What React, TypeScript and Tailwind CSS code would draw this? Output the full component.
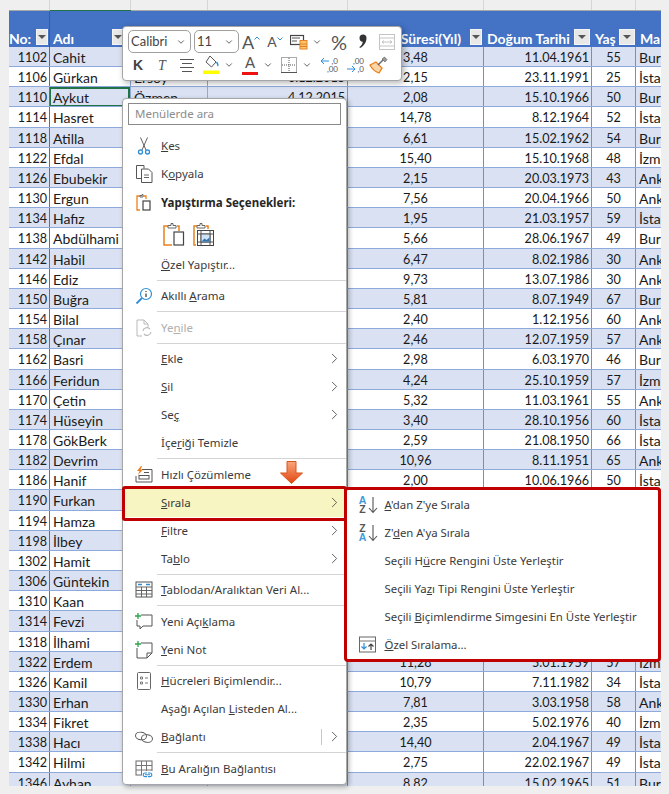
import React from 'react'
import { ChevronRight, ChevronDown } from 'lucide-react'

const cols = 'grid grid-cols-[41px_81px_77px_140px_136px_108px_44px_25px]'

const rows: string[][] = [
  ['1102', 'Cahit', 'Yılmaz', '5.11.2012', '3,48', '11.04.1961', '55', 'Bur'],
  ['1106', 'Gürkan', 'Ersoy', '6.12.2015', '2,15', '23.11.1991', '25', 'İsta'],
  ['1110', 'Aykut', 'Özmen', '4.12.2015', '2,08', '15.10.1966', '50', 'Bur'],
  ['1114', 'Hasret', '', '', '14,78', '8.12.1964', '52', 'İsta'],
  ['1118', 'Atilla', '', '', '6,61', '15.02.1962', '54', 'Bur'],
  ['1122', 'Efdal', '', '', '15,40', '15.10.1968', '48', 'İzm'],
  ['1126', 'Ebubekir', '', '', '2,15', '20.03.1973', '43', 'Ank'],
  ['1130', 'Ergun', '', '', '7,56', '20.04.1966', '50', 'Ank'],
  ['1134', 'Hafız', '', '', '1,95', '21.03.1957', '59', 'İsta'],
  ['1138', 'Abdülhami', '', '', '5,66', '28.06.1967', '49', 'Bur'],
  ['1142', 'Habil', '', '', '6,47', '8.02.1986', '30', 'Ank'],
  ['1146', 'Ediz', '', '', '9,73', '13.07.1986', '30', 'Ank'],
  ['1150', 'Buğra', '', '', '5,81', '8.07.1949', '67', 'Bur'],
  ['1154', 'Bilal', '', '', '2,40', '1.12.1956', '60', 'Ank'],
  ['1158', 'Çınar', '', '', '2,46', '12.07.1959', '57', 'Ank'],
  ['1162', 'Basri', '', '', '2,98', '6.03.1970', '46', 'Bur'],
  ['1166', 'Feridun', '', '', '4,24', '25.10.1959', '57', 'İzm'],
  ['1170', 'Çetin', '', '', '5,32', '11.03.1961', '55', 'Ank'],
  ['1174', 'Hüseyin', '', '', '3,40', '28.10.1956', '60', 'İsta'],
  ['1178', 'GökBerk', '', '', '2,59', '21.08.1950', '66', 'İsta'],
  ['1182', 'Devrim', '', '', '10,96', '8.11.1951', '65', 'Ank'],
  ['1186', 'Hanif', '', '', '2,00', '10.06.1966', '50', 'İsta'],
  ['1190', 'Furkan', '', '', '', '', '', ''],
  ['1194', 'Hamza', '', '', '', '', '', ''],
  ['1198', 'İlbey', '', '', '', '', '', ''],
  ['1302', 'Hamit', '', '', '', '', '', ''],
  ['1306', 'Güntekin', '', '', '', '', '', ''],
  ['1310', 'Kaan', '', '', '', '', '', ''],
  ['1314', 'Fevzi', '', '', '', '', '', ''],
  ['1318', 'İlhami', '', '', '', '', '', ''],
  ['1322', 'Erdem', '', '', '11,28', '5.01.1959', '57', 'İzm'],
  ['1326', 'Kamil', '', '', '10,79', '7.11.1982', '34', 'İsta'],
  ['1330', 'Erhan', '', '', '7,81', '3.03.1958', '58', 'Ank'],
  ['1334', 'Fikret', '', '', '2,35', '5.02.1976', '40', 'İzm'],
  ['1338', 'Hacı', '', '', '14,40', '2.04.1967', '49', 'İsta'],
  ['1342', 'Hilmi', '', '', '2,75', '22.02.1967', '49', 'İsta'],
  ['1346', 'Ayhan', '', '', '8,82', '15.02.1965', '51', 'Bur'],
]

function FilterBtn({ wide }: { wide?: boolean }) {
  return (
    <div className={`${wide ? 'w-[16px]' : 'w-[12px]'} h-[16px] shrink-0 bg-[#e8e8e8] border border-[#f5f5f5] flex items-center justify-center`}>
      <div className="w-0 h-0 border-l-[4px] border-r-[4px] border-t-[4px] border-l-transparent border-r-transparent border-t-[#555555]" />
    </div>
  )
}

function Header() {
  const cell = 'flex items-end justify-between pb-[2px] border-r border-[#4472c4]'
  const label = 'mb-[-3px]'
  return (
    <div className={`${cols} h-[36px] bg-[#4472c4] text-white font-bold text-[14px] leading-[18px]`}>
      <div className={`${cell} pr-[1px] border-r-[#2f5cb0]`}>
        <span className={label}>No:</span>
        <FilterBtn />
      </div>
      <div className={`${cell} pl-[3px] pr-[6px]`}>
        <span className={label}>Adı</span>
        <FilterBtn />
      </div>
      <div className={cell} />
      <div className={cell} />
      <div className={`${cell} pr-[1px] justify-end gap-[9px]`}>
        <span className={label}>Süresi(Yıl)</span>
        <FilterBtn />
      </div>
      <div className={`${cell} pl-[3px] pr-[1px]`}>
        <span className={label}>Doğum Tarihi</span>
        <FilterBtn wide />
      </div>
      <div className={`${cell} pl-[3px]`}>
        <span className={label}>Yaş</span>
        <FilterBtn wide />
      </div>
      <div className="flex items-end pb-[2px] pl-[4px] overflow-hidden">
        <span className={label}>Ma</span>
      </div>
    </div>
  )
}

function Sheet() {
  return (
    <div className="h-[775px] overflow-hidden">
      <Header />
      {rows.map((r, i) => (
        <div
          key={r[0]}
          className={`${cols} grid-rows-[19.16px] h-[20.16px] leading-[22px] text-[14px] text-[#1a1a1a] border-b border-[#8ea9db] ${i % 2 === 0 ? 'bg-[#d9e1f2]' : 'bg-white'}`}
        >
          <div className="text-right text-[12.6px] pr-[2px] border-r border-[#4472c4]">{r[0]}</div>
          <div className="relative pl-[3px] border-r border-[#8ea9db] whitespace-nowrap overflow-hidden">
            {r[1]}
            {i === 2 && <div className="absolute -left-[1px] right-0 top-0 -bottom-[1px] border-2 border-[#217346]" />}
          </div>
          <div className="pl-[3px] border-r border-[#8ea9db]">{r[2]}</div>
          <div className="text-right text-[12.6px] pr-[2px] border-r border-[#6f90d0]">{r[3]}</div>
          <div className="text-center text-[12.6px] border-r border-[#6f90d0]">{r[4]}</div>
          <div className="text-right text-[12.6px] pr-[2px] border-r border-[#6f90d0]">{r[5]}</div>
          <div className="text-center text-[12.6px] border-r border-[#6f90d0]">{r[6]}</div>
          <div className="pl-[3px] whitespace-nowrap overflow-hidden">{r[7]}</div>
        </div>
      ))}
    </div>
  )
}

/* --- icons --- */
const Ico = ({ children, s = 20 }: { children: React.ReactNode; s?: number }) => (
  <svg width={s} height={s} viewBox="0 0 20 20" fill="none" strokeWidth="1" stroke="#555555">
    {children}
  </svg>
)

const Scissors = () => (
  <Ico>
    <path d="M6.500 1.500l5.500 12.500M13.500 1.500L8 14" stroke="#606060" strokeWidth="1" />
    <circle cx="6.500" cy="16" r="2" stroke="#2e8fd8" strokeWidth="1.300" />
    <circle cx="13.500" cy="16" r="2" stroke="#2e8fd8" strokeWidth="1.300" />
  </Ico>
)
const Copy = () => (
  <Ico>
    <path d="M7 14.500H2.500V1.500H10l0 3" />
    <path d="M7.500 5h7l3.500 3.500v10H7.500z" fill="#fff" />
    <path d="M10 11h5M10 13.500h5" strokeWidth=".9" />
  </Ico>
)
const PasteSmall = () => (
  <Ico>
    <path d="M7 3H3v14h3" stroke="#e8821e" strokeWidth="1.300" />
    <path d="M9.500 3h2.500v3" stroke="#e8821e" strokeWidth="1.300" />
    <path d="M6 4V2.500h2V1.500h1V4z" stroke="#666" fill="#fff" />
    <rect x="9" y="8" width="7" height="9" stroke="#444" fill="#fff" strokeWidth="1.200" />
  </Ico>
)
const PasteBig = () => (
  <svg width="22" height="25" viewBox="0 0 22 25" fill="none" stroke="#666">
    <path d="M5 4H1v19h8" stroke="#e8821e" strokeWidth="1.500" />
    <path d="M14 4h2v5" stroke="#e8821e" strokeWidth="1.500" />
    <path d="M5 6V3.500h3V1.500h2v2h3V6z" fill="#fff" />
    <rect x="11" y="10" width="9.500" height="13" stroke="#444" fill="#fff" strokeWidth="1.200" />
  </svg>
)
const PastePicture = () => (
  <svg width="22" height="25" viewBox="0 0 22 25" fill="none" stroke="#666">
    <path d="M5 4H1v19h2" stroke="#e8821e" strokeWidth="1.500" />
    <path d="M13 4h2v3" stroke="#e8821e" strokeWidth="1.500" />
    <path d="M4 6V3.500h3V1.500h2v2h3V6z" fill="#fff" />
    <rect x="4.500" y="8.500" width="16" height="15" stroke="#444" fill="#fff" />
    <path d="M4.500 12h16M4.500 20h16M8 8.500v15M17 8.500v15" stroke="#555" />
    <rect x="8" y="12" width="9" height="8" fill="#cfe3f5" stroke="#555" />
    <path d="M8.500 19.500l3-3 2 1.500 3-2.500v4z" fill="#2e75b6" stroke="none" />
  </svg>
)
const SmartLookup = () => (
  <Ico>
    <circle cx="12" cy="8" r="5.500" stroke="#2e8fd8" strokeWidth="1.200" />
    <path d="M8 12L2.500 17.500" stroke="#2e8fd8" strokeWidth="1.800" />
    <path d="M12 5v1M12 7.500v3.500" stroke="#444" strokeWidth="1.300" />
  </Ico>
)
const Refresh = () => (
  <Ico>
    <path d="M8 18H3V2h7l4 4v3M10 2v4h4" stroke="#b9b9b9" />
    <path d="M9 13a4 4 0 0 1 7-2M17 14a4 4 0 0 1-7 2" stroke="#b9b9b9" strokeWidth="1.200" />
  </Ico>
)
const QuickAnalysis = () => (
  <Ico>
    <path d="M8 4.500h10V17H2v-6" stroke="#555" />
    <rect x="5" y="10.500" width="10" height="3.500" stroke="#555" />
    <path d="M10 7.500h5" stroke="#555" />
    <path d="M7 1L3 6h2.500L4 10l5-5.500H6.500L8 1z" fill="#ec7c1c" stroke="none" />
  </Ico>
)
const TableData = () => (
  <Ico>
    <rect x="2" y="2" width="16" height="15" stroke="#555" />
    <path d="M2 7h16M2 10.500h16M2 14h16M7.500 7v10M12.500 7v10" stroke="#666" />
    <path d="M4 4.500h4M12 4.500h4" stroke="#2e8fd8" strokeWidth="1.400" />
  </Ico>
)
const NewComment = () => (
  <Ico>
    <path d="M7 3h11v11H9l-3 3v-3H3V8" stroke="#555" />
    <path d="M4 1v6M1 4h6" stroke="#2ea44f" strokeWidth="1.300" />
  </Ico>
)
const NewNote = () => (
  <Ico>
    <path d="M7 3h11v10l-5 5H3V8" stroke="#555" />
    <path d="M13 18v-5h5" stroke="#555" />
    <path d="M4 1v6M1 4h6" stroke="#2ea44f" strokeWidth="1.300" />
  </Ico>
)
const FormatCells = () => (
  <Ico>
    <rect x="3.500" y="1.500" width="13" height="17" rx="1" stroke="#666" />
    <path d="M6.500 6h2v2h-2zM6.500 11h2v2h-2zM11 7h3M11 12h3" stroke="#777" />
  </Ico>
)
const LinkIco = () => (
  <Ico>
    <ellipse cx="7" cy="9" rx="5.500" ry="3.800" stroke="#555" transform="rotate(8 7 9)" />
    <ellipse cx="13" cy="11.500" rx="5.500" ry="3.800" stroke="#555" transform="rotate(8 13 11.500)" />
  </Ico>
)
const RangeLink = () => (
  <Ico>
    <rect x="2" y="2" width="16" height="14" stroke="#666" />
    <path d="M2 6.500h16M2 11h16M7.500 2v14M12.500 2v14" stroke="#777" />
    <rect x="8" y="12" width="11" height="7" fill="#fff" stroke="none" />
    <path d="M13 14h-2a1.800 1.800 0 0 0 0 3.600h2M14 14h2a1.800 1.800 0 0 1 0 3.600h-2M11 15.800h5" stroke="#2e8fd8" strokeWidth="1.100" />
  </Ico>
)
const SortIco = ({ down }: { down?: boolean }) => {
  const top = down ? '#555555' : '#3f9ade'
  const bottom = down ? '#3f9ade' : '#555555'
  return (
    <span className="relative flex w-[20px] h-[20px] items-center">
      <span className="flex flex-col items-center w-[10px] text-[10.500px] leading-[9.500px] font-bold font-['Liberation_Sans',sans-serif]">
        <span style={{ color: top }}>{down ? 'Z' : 'A'}</span>
        <span style={{ color: bottom }}>{down ? 'A' : 'Z'}</span>
      </span>
      <svg width="10" height="18" viewBox="0 0 10 18" fill="none" stroke="#555" strokeWidth="1.100">
        <path d="M5 1v15M1 12l4 4.500L9 12" />
      </svg>
    </span>
  )
}
const CustomSort = () => (
  <Ico>
    <rect x="1.500" y="2" width="16" height="15" stroke="#666" />
    <path d="M1.500 6h16" stroke="#777" />
    <path d="M6 8v6M3.500 11.500L6 14l2.500-2.500" stroke="#2e8fd8" strokeWidth="1.200" />
    <path d="M13 15V9M10.500 11.500L13 9l2.500 2.500" stroke="#444" strokeWidth="1.200" />
  </Ico>
)

/* --- menu --- */
function Sep() {
  return (
    <div className="h-[3.500px] flex items-center pl-[34px]">
      <div className="h-px w-full bg-[#d4d4d4]" />
    </div>
  )
}

function Arrow() {
  return <ChevronRight className="w-[17px] h-[17px] text-[#555555] absolute right-[3px] top-[5px]" strokeWidth={1.300} />
}

function Item({
  icon,
  children,
  arrow,
  disabled,
  divider,
}: {
  icon?: React.ReactNode
  children: React.ReactNode
  arrow?: boolean
  disabled?: boolean
  divider?: boolean
}) {
  return (
    <div className={`relative h-[28px] flex items-center whitespace-nowrap ${disabled ? 'text-[#b0b0b0]' : ''}`}>
      <span className="w-[38px] flex justify-center shrink-0 pl-[3px]">{icon}</span>
      <span>{children}</span>
      {divider && <span className="absolute right-[24px] top-[6px] h-[16px] w-px bg-[#c8c8c8]" />}
      {arrow && <Arrow />}
    </div>
  )
}

function ContextMenu() {
  return (
    <div className="absolute left-[122px] top-[98px] w-[225px] h-[687px] bg-white border border-[#a6a6a6] rounded-[4px] shadow-[2px_2px_5px_rgba(0,0,0,0.3)] text-[11.500px] text-[#3b3b3b] font-['Noto_Sans',sans-serif]">
      <div className="mx-[5px] mt-[4px] mb-[6.500px] h-[22px] border border-[#8a8a8a] flex items-center pl-[6px] text-[#8c8c8c]">Menülerde ara</div>
      <Item icon={<Scissors />}><u>K</u>es</Item>
      <Item icon={<Copy />}>K<u>o</u>pyala</Item>
      <div className="h-[31px] flex items-center font-bold text-[#262626]">
        <span className="w-[38px] flex justify-center shrink-0 pl-[3px]"><PasteSmall /></span>
        Yapıştırma Seçenekleri:
      </div>
      <div className="h-[32px] flex items-center gap-[8px] pl-[40px]">
        <PasteBig />
        <PastePicture />
      </div>
      <Item><u>Ö</u>zel Yapıştır...</Item>
      <Sep />
      <Item icon={<SmartLookup />}>Akıllı <u>A</u>rama</Item>
      <Sep />
      <Item icon={<Refresh />} disabled>Ye<u>n</u>ile</Item>
      <Sep />
      <Item arrow><u>E</u>kle</Item>
      <Item arrow><u>S</u>il</Item>
      <Item arrow>Se<u>ç</u></Item>
      <Item>İçe<u>r</u>iği Temizle</Item>
      <Sep />
      <Item icon={<QuickAnalysis />}>Hızlı Çözümleme</Item>
      <div className="relative bg-[#f7f5c2]">
        <Item arrow><u>S</u>ırala</Item>
        <div className="absolute -left-[1px] -right-[1px] -top-[2.500px] -bottom-[4px] border-[3.500px] border-[#c00000] rounded-[3px]" />
      </div>
      <Item arrow><u>F</u>iltre</Item>
      <Item arrow>Ta<u>b</u>lo</Item>
      <Sep />
      <Item icon={<TableData />}><u>T</u>ablodan/Aralıktan Veri Al...</Item>
      <Sep />
      <Item icon={<NewComment />}>Yeni Açı<u>k</u>lama</Item>
      <Item icon={<NewNote />}><u>Y</u>eni Not</Item>
      <Sep />
      <Item icon={<FormatCells />}><u>H</u>ücreleri Biçimlendir...</Item>
      <Item>Aşağı Açılan <u>L</u>isteden Al...</Item>
      <Item icon={<LinkIco />} arrow divider><u>B</u>ağlantı</Item>
      <Sep />
      <Item icon={<RangeLink />}><u>B</u>u Aralığın Bağlantısı</Item>
    </div>
  )
}

function SubMenu() {
  const row = 'h-[28px] flex items-center whitespace-nowrap'
  const slot = 'w-[34px] flex justify-center shrink-0'
  return (
    <div className="absolute left-[344px] top-[487px] w-[317px] h-[175px] bg-white border-[3.500px] border-[#c00000] rounded-[4px] text-[11.400px] text-[#3b3b3b] font-['Noto_Sans',sans-serif] pl-[3.500px] pt-[1px]">
      <div className={row}><span className={slot}><SortIco /></span><span><u>A</u>'dan Z'ye Sırala</span></div>
      <div className={row}><span className={slot}><SortIco down /></span><span>Z'<u>d</u>en A'ya Sırala</span></div>
      <div className={row}><span className={slot} /><span>Seçili H<u>ü</u>cre Rengini Üste Yerleştir</span></div>
      <div className={row}><span className={slot} /><span>Seçili Ya<u>z</u>ı Tipi Rengini Üste Yerleştir</span></div>
      <div className={row}><span className={slot} /><span>Seçili <u>B</u>içimlendirme Simgesini En Üste Yerleştir</span></div>
      <div className={row}><span className={slot}><CustomSort /></span><span><u>Ö</u>zel Sıralama...</span></div>
    </div>
  )
}

/* --- mini toolbar --- */
function Caret() {
  return <ChevronDown className="w-[10px] h-[10px] text-[#444444]" strokeWidth={2} />
}

function Combo({ w, label }: { w: string; label: string }) {
  return (
    <div className={`${w} h-[23px] border border-[#a0a0a0] rounded-[5px] flex items-center justify-between pl-[2px] pr-[4px] text-[#444444] text-[13px]`}>
      <span>{label}</span>
      <Caret />
    </div>
  )
}

const slot = 'w-[24px] h-[22px] flex items-center justify-center shrink-0'
const caretSlot = 'w-[12px] h-[22px] flex items-center justify-center shrink-0'

function Toolbar() {
  return (
    <div className="absolute left-[122px] top-[26px] w-[280px] h-[55px] bg-white border border-[#a6a6a6] rounded-[4px] shadow-[2px_2px_6px_rgba(0,0,0,0.3)] font-['Lato',sans-serif] pt-[3px]">
      <div className="flex items-center pl-[5px]">
        <Combo w="w-[63px]" label="Calibri" />
        <div className="w-[3px]" />
        <Combo w="w-[45px]" label="11" />
        <div className={slot}>
          <span className="text-[18px] text-[#555555] leading-none">A</span>
          <svg width="6" height="4" viewBox="0 0 6 4" className="self-start mt-[5px]" fill="none" stroke="#2e8fd8"><path d="M.5 3.500L3 1l2.500 2.500" /></svg>
        </div>
        <div className={slot}>
          <span className="text-[14px] text-[#555555] leading-none">A</span>
          <svg width="6" height="4" viewBox="0 0 6 4" className="self-start mt-[6px]" fill="none" stroke="#2e8fd8"><path d="M.5.500L3 3 5.500.500" /></svg>
        </div>
        <div className={slot}>
          <svg width="18" height="17" viewBox="0 0 18 17" fill="none" stroke="#444">
            <rect x=".500" y="2.500" width="13" height="9" strokeWidth="1.200" />
            <path d="M2 5h8M2 8h5" strokeWidth="1" stroke="#555" />
            <rect x="10" y="7.500" width="7" height="8.500" fill="#f8c471" stroke="#e8821e" />
            <path d="M10 11h7M10 13.500h7" stroke="#e8821e" />
          </svg>
        </div>
        <div className={caretSlot}><Caret /></div>
        <div className={`${slot} ml-[4px] text-[20px] leading-none text-[#555555]`}>%</div>
        <div className={slot}>
          <svg width="10" height="15" viewBox="0 0 10 15" fill="#333333">
            <path d="M1.500 4a3.500 3.500 0 0 1 7 0c0 4-2.500 8-6.500 10l-.6-1c2-1.500 3.100-3 3.400-5.300C3 7.900 1.500 6.300 1.500 4z" />
          </svg>
        </div>
        <div className={slot}>
          <svg width="16" height="16" viewBox="0 0 16 16" fill="none" stroke="#c4c4c4">
            <rect x=".500" y=".500" width="15" height="15" />
            <path d="M.500 4h15M.500 12h15" />
            <path d="M3 8h10M3 8l2-1.500M3 8l2 1.500M13 8l-2-1.500M13 8l-2 1.500" />
          </svg>
        </div>
      </div>
      <div className="flex items-center pl-[3px] mt-[1px]">
        <div className={`${slot} text-[14px] font-bold text-[#444444] font-['Liberation_Sans',sans-serif]`}>K</div>
        <div className={`${slot} text-[14px] italic text-[#555555] font-['Liberation_Serif',serif]`}>T</div>
        <div className={`${slot} ml-[1px]`}>
          <svg width="16" height="15" viewBox="0 0 16 15" stroke="#555"><path d="M1 1.500h14M3 5.500h10M1 9.500h14M3 13.500h10" /></svg>
        </div>
        <div className={slot}>
          <svg width="18" height="20" viewBox="0 0 18 20" fill="none" stroke="#555">
            <path d="M8 1l6 6-4.500 5L4 7z" />
            <path d="M14.500 7c1.500 2 2 3 1 4" stroke="#2e8fd8" strokeWidth="1.400" />
            <rect x="1" y="15.500" width="16" height="3.500" fill="#ffff00" stroke="none" />
          </svg>
        </div>
        <div className={caretSlot}><Caret /></div>
        <div className={`${slot} ml-[3px]`}>
          <div className="flex flex-col items-center leading-none">
            <span className="text-[15px] text-[#555555] h-[15px]">A</span>
            <span className="mt-[2px] w-[16px] h-[3.500px] bg-[#ee1111]" />
          </div>
        </div>
        <div className={caretSlot}><Caret /></div>
        <div className={`${slot} ml-[3px]`}>
          <svg width="16" height="16" viewBox="0 0 16 16" fill="none" stroke="#555" strokeDasharray="1 1">
            <rect x=".500" y=".500" width="15" height="15" />
            <path d="M8 1v14M1 8h14" />
            <path d="M0 15.500h16" strokeDasharray="none" />
          </svg>
        </div>
        <div className={caretSlot}><Caret /></div>
        <div className={`${slot} ml-[4px]`}>
          <div className="w-[18px] text-[8px] leading-[8.500px] text-[#555555]">
            <div className="flex items-center justify-between">
              <svg width="10" height="8" viewBox="0 0 10 8" fill="none" stroke="#2e8fd8"><path d="M9 4H1M4 1L1 4l3 3" /></svg>
              <span>,0</span>
            </div>
            <div className="text-right">,00</div>
          </div>
        </div>
        <div className={`${slot} ml-[2px]`}>
          <div className="w-[18px] text-[8px] leading-[8.500px] text-[#555555]">
            <div className="text-right">,00</div>
            <div className="flex items-center justify-between">
              <svg width="10" height="8" viewBox="0 0 10 8" fill="none" stroke="#2e8fd8"><path d="M1 4h8M6 1l3 3-3 3" /></svg>
              <span>,0</span>
            </div>
          </div>
        </div>
        <div className="w-[23px] h-[22px] flex items-center justify-center shrink-0">
          <svg width="19" height="18" viewBox="0 0 19 18" fill="none">
            <path d="M1 9l6-3 6 6-3 5c-3-1-7-4-9-8z" fill="#fbd5a5" stroke="#e8821e" strokeWidth="1.300" />
            <path d="M9 9l5-5" stroke="#666" strokeWidth="1.500" />
            <path d="M13 3l2.500-2 2.500 2.500-2 2.500z" fill="#999" stroke="#555" strokeWidth=".6" />
          </svg>
        </div>
      </div>
    </div>
  )
}

function OrangeArrow() {
  return (
    <svg width="23" height="23" viewBox="0 0 23 23" className="absolute left-[280px] top-[461px]">
      <defs>
        <linearGradient id="orangeDown" x1="0" y1="0" x2="0" y2="1">
          <stop offset="0" stopColor="#f9a77c" />
          <stop offset="1" stopColor="#e2460f" />
        </linearGradient>
      </defs>
      <path d="M7 .500h9V12h6.500L11.500 22.500.500 12H7z" fill="url(#orangeDown)" stroke="#d9541e" />
    </svg>
  )
}

export default function App() {
  return (
    <div className="relative w-[669px] h-[794px] overflow-hidden bg-[#efefef] font-['Lato',sans-serif]">
      <div className={`${cols} ml-[9px] h-[10px] w-[652px]`}>
        {[41, 81, 77, 140, 136, 108, 44].map((w) => (
          <div key={w} className="border-r border-[#d6d6d6]" />
        ))}
      </div>
      <div className="ml-[9px] w-[652px] h-px bg-[#a8a8a8] flex">
        <div className="ml-[41px] w-[81px] h-[1px] bg-[#217346]" />
      </div>
      <div className="ml-[9px] w-[652px]">
        <Sheet />
      </div>
      <Toolbar />
      <ContextMenu />
      <SubMenu />
      <OrangeArrow />
    </div>
  )
}
